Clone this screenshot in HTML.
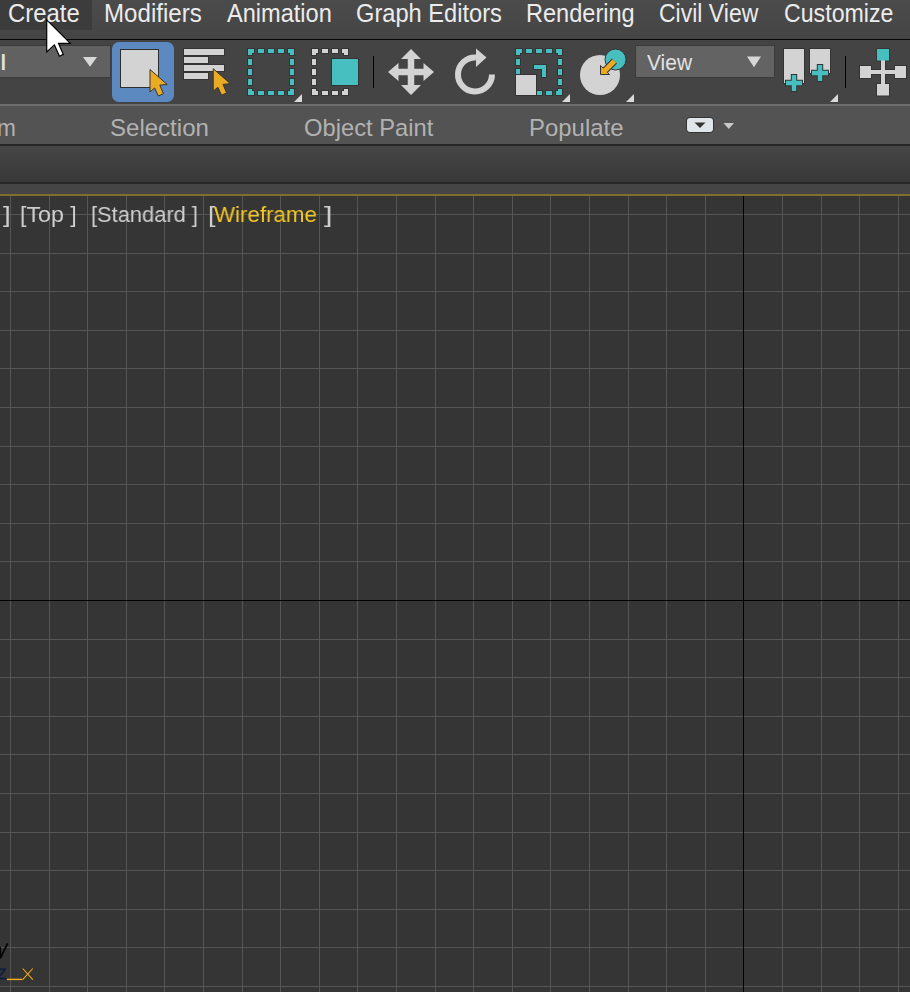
<!DOCTYPE html><html><head><meta charset="utf-8"><style>
html,body{margin:0;padding:0;background:#353535;width:910px;height:992px;overflow:hidden;}
.t{position:absolute;white-space:nowrap;font-family:"Liberation Sans",sans-serif;transform-origin:0 0;line-height:normal;}
.b{position:absolute;left:0;width:910px;}
</style></head><body>

<div class="b" style="top:0;height:39px;background:linear-gradient(#4b4b4b,#454545);"></div>
<div style="position:absolute;left:0;top:0;width:92px;height:30px;background:#3c3c3c;"></div>
<div class="b" style="top:39px;height:1px;background:#070707;"></div>
<div class="b" style="top:40px;height:64px;background:#444;"></div>
<div class="b" style="top:104px;height:2px;background:#6e6e6e;"></div>
<div class="b" style="top:106px;height:38px;background:#535353;"></div>
<div class="b" style="top:144px;height:2px;background:#262626;"></div>
<div class="b" style="top:146px;height:36px;background:linear-gradient(#464646,#383838);"></div>
<div class="b" style="top:182px;height:2px;background:#282828;"></div>
<div class="b" style="top:184px;height:10px;background:#454545;"></div>
<div class="b" style="top:194px;height:2px;background:#816d2c;"></div>
<div style="position:absolute;left:-1px;top:45px;width:110px;height:31px;background:#616161;border:1px solid #3b3b3b;"></div>
<div style="position:absolute;left:635px;top:45px;width:138px;height:31px;background:#636363;border:1px solid #3b3b3b;"></div>

<svg width="910" height="992" style="position:absolute;left:0;top:0"><rect x="10" y="196" width="1" height="796" fill="#555"/>
<rect x="49" y="196" width="1" height="796" fill="#555"/>
<rect x="87" y="196" width="1" height="796" fill="#555"/>
<rect x="126" y="196" width="1" height="796" fill="#555"/>
<rect x="164" y="196" width="1" height="796" fill="#555"/>
<rect x="203" y="196" width="1" height="796" fill="#555"/>
<rect x="242" y="196" width="1" height="796" fill="#555"/>
<rect x="280" y="196" width="1" height="796" fill="#555"/>
<rect x="319" y="196" width="1" height="796" fill="#555"/>
<rect x="357" y="196" width="1" height="796" fill="#555"/>
<rect x="396" y="196" width="1" height="796" fill="#555"/>
<rect x="435" y="196" width="1" height="796" fill="#555"/>
<rect x="473" y="196" width="1" height="796" fill="#555"/>
<rect x="512" y="196" width="1" height="796" fill="#555"/>
<rect x="550" y="196" width="1" height="796" fill="#555"/>
<rect x="589" y="196" width="1" height="796" fill="#555"/>
<rect x="628" y="196" width="1" height="796" fill="#555"/>
<rect x="666" y="196" width="1" height="796" fill="#555"/>
<rect x="705" y="196" width="1" height="796" fill="#555"/>
<rect x="743" y="196" width="1" height="796" fill="#000"/>
<rect x="782" y="196" width="1" height="796" fill="#555"/>
<rect x="821" y="196" width="1" height="796" fill="#555"/>
<rect x="859" y="196" width="1" height="796" fill="#555"/>
<rect x="898" y="196" width="1" height="796" fill="#555"/>
<rect x="0" y="214" width="910" height="1" fill="#555"/>
<rect x="0" y="253" width="910" height="1" fill="#555"/>
<rect x="0" y="291" width="910" height="1" fill="#555"/>
<rect x="0" y="330" width="910" height="1" fill="#555"/>
<rect x="0" y="368" width="910" height="1" fill="#555"/>
<rect x="0" y="407" width="910" height="1" fill="#555"/>
<rect x="0" y="446" width="910" height="1" fill="#555"/>
<rect x="0" y="484" width="910" height="1" fill="#555"/>
<rect x="0" y="523" width="910" height="1" fill="#555"/>
<rect x="0" y="561" width="910" height="1" fill="#555"/>
<rect x="0" y="639" width="910" height="1" fill="#555"/>
<rect x="0" y="677" width="910" height="1" fill="#555"/>
<rect x="0" y="716" width="910" height="1" fill="#555"/>
<rect x="0" y="754" width="910" height="1" fill="#555"/>
<rect x="0" y="793" width="910" height="1" fill="#555"/>
<rect x="0" y="832" width="910" height="1" fill="#555"/>
<rect x="0" y="870" width="910" height="1" fill="#555"/>
<rect x="0" y="909" width="910" height="1" fill="#555"/>
<rect x="0" y="947" width="910" height="1" fill="#555"/>
<rect x="0" y="986" width="910" height="1" fill="#555"/>
<rect x="0" y="600" width="910" height="1" fill="#000"/>
<rect x="743" y="196" width="1" height="796" fill="#000"/><rect x="112" y="42" width="62" height="60" rx="7" fill="#5d89c1"/>
<rect x="120.5" y="49.5" width="38" height="38" fill="#d3d3d3" stroke="#2e2e2e" stroke-width="1"/>
<path d="M150.00,69.50 L150.00,92.00 L154.60,88.00 L158.40,96.00 L163.40,93.70 L159.80,85.10 L167.20,84.50 Z" fill="#eaab22" stroke="#343434" stroke-width="1" stroke-linejoin="miter"/>
<g fill="#d3d3d3" stroke="#343434" stroke-width="1"><rect x="183.5" y="48.5" width="41" height="7"/><rect x="183.5" y="56.5" width="25" height="7"/><rect x="183.5" y="64.5" width="41" height="7"/><rect x="183.5" y="72.5" width="25" height="7"/></g>
<path d="M213.20,68.70 L213.20,91.20 L217.80,87.20 L221.60,95.20 L226.60,92.90 L223.00,84.30 L230.40,83.70 Z" fill="#eaab22" stroke="#343434" stroke-width="1" stroke-linejoin="miter"/>
<path d="M248,49 h6 v4 h-2 v2 h-4 Z M294,49 h-6 v4 h2 v2 h4 Z M248,95 h6 v-4 h-2 v-2 h-4 Z M294,95 h-6 v-4 h2 v-2 h4 Z M258,49 h6 v4 h-6 Z M268,49 h6 v4 h-6 Z M278,49 h6 v4 h-6 Z M258,91 h6 v4 h-6 Z M268,91 h6 v4 h-6 Z M278,91 h6 v4 h-6 Z M248,59 h4 v6 h-4 Z M248,69 h4 v6 h-4 Z M248,79 h4 v6 h-4 Z M290,59 h4 v6 h-4 Z M290,69 h4 v6 h-4 Z M290,79 h4 v6 h-4 Z" fill="#47bfc1" stroke="#343434" stroke-width="2" paint-order="stroke"/>
<path d="M302,94 L302,102 L294,102 Z" fill="#d9d9d9"/>
<path d="M312,49 h6 v4 h-2 v2 h-4 Z M348,49 h-6 v4 h2 v2 h4 Z M312,95 h6 v-4 h-2 v-2 h-4 Z M348,95 h-6 v-4 h2 v-2 h4 Z M322,49 h6 v4 h-6 Z M332,49 h6 v4 h-6 Z M322,91 h6 v4 h-6 Z M332,91 h6 v4 h-6 Z M312,59 h4 v6 h-4 Z M312,69 h4 v6 h-4 Z M312,79 h4 v6 h-4 Z" fill="#d3d3d3" stroke="#343434" stroke-width="2" paint-order="stroke"/>
<rect x="332" y="59" width="26" height="26" fill="#47bfc1" stroke="#343434" stroke-width="2" paint-order="stroke"/>
<rect x="373" y="56" width="1" height="32" fill="#000"/>
<path d="M411,49 L421,59 L414.25,59 L414.25,68.75 L423.5,68.75 L423.5,63 L434,72 L423.5,81 L423.5,75.25 L414.25,75.25 L414.25,85 L421,85 L411,95 L401,85 L407.75,85 L407.75,75.25 L398.5,75.25 L398.5,81 L388,72 L398.5,63 L398.5,68.75 L407.75,68.75 L407.75,59 L401,59 Z" fill="#d3d3d3"/>
<path d="M492,74.5 A17,17 0 1 1 476,57.5" fill="none" stroke="#d3d3d3" stroke-width="6"/>
<path d="M476,48.5 L486.5,57.5 L476,67 Z" fill="#d3d3d3"/>
<path d="M516,49 h6 v4 h-2 v2 h-4 Z M562,49 h-6 v4 h2 v2 h4 Z M516,95 h6 v-4 h-2 v-2 h-4 Z M562,95 h-6 v-4 h2 v-2 h4 Z M526,49 h6 v4 h-6 Z M536,49 h6 v4 h-6 Z M546,49 h6 v4 h-6 Z M558,59 h4 v6 h-4 Z M558,69 h4 v6 h-4 Z M558,79 h4 v6 h-4 Z" fill="#47bfc1" stroke="#343434" stroke-width="2" paint-order="stroke"/>
<path d="M516,49 h6 v4 h-2 v2 h-4 Z M516,59 h4 v6 h-4 Z M516,69 h4 v6 h-4 Z M537,91 h5 v4 h-5 Z M546,91 h6 v4 h-6 Z" fill="#47bfc1" stroke="#343434" stroke-width="2" paint-order="stroke"/>
<rect x="516" y="75" width="20" height="20" fill="#d3d3d3" stroke="#343434" stroke-width="2" paint-order="stroke"/>
<path d="M534,65 h12 v12 h-4 v-8 h-8 Z" fill="#47bfc1" stroke="#343434" stroke-width="2" paint-order="stroke"/>
<path d="M570,94 L570,102 L562,102 Z" fill="#d9d9d9"/>
<circle cx="600" cy="75" r="20" fill="#d3d3d3"/>
<circle cx="615.5" cy="59.5" r="10.5" fill="#47bfc1" stroke="#343434" stroke-width="1"/>
<path d="M614.5,61 L604,71.5" stroke="#343434" stroke-width="7" fill="none"/>
<path d="M600.5,65.5 L600.5,74.5 L609.5,74.5 Z" fill="#eaab22" stroke="#343434" stroke-width="1"/>
<path d="M614.5,61 L603.5,72" stroke="#eaab22" stroke-width="5" fill="none"/>
<path d="M601,66.5 L601,74 L608.5,74 Z" fill="#eaab22"/>
<path d="M634,94 L634,102 L626,102 Z" fill="#d9d9d9"/>
<path d="M83,57 L97,57 L90,66.7 Z" fill="#d8d8d8"/>
<path d="M747,56.5 L761,56.5 L754,67.2 Z" fill="#d8d8d8"/>
<rect x="784" y="49" width="20" height="34" fill="#d3d3d3" stroke="#343434" stroke-width="2" paint-order="stroke"/>
<rect x="810" y="49" width="20" height="24" fill="#d3d3d3" stroke="#343434" stroke-width="2" paint-order="stroke"/>
<path d="M791.8,75 h4.4 v5.8 h5.8 v4.4 h-5.8 v5.8 h-4.4 v-5.8 h-5.8 v-4.4 h5.8 Z" fill="#47bfc1" stroke="#343434" stroke-width="2" paint-order="stroke"/>
<path d="M817.8,65 h4.4 v5.8 h5.8 v4.4 h-5.8 v5.8 h-4.4 v-5.8 h-5.8 v-4.4 h5.8 Z" fill="#47bfc1" stroke="#343434" stroke-width="2" paint-order="stroke"/>
<path d="M838,94 L838,102 L830,102 Z" fill="#d9d9d9"/>
<rect x="845" y="56" width="1" height="32" fill="#000"/>
<path d="M860,66 h11 v12 h-11 Z M895,66 h11 v12 h-11 Z M877,84 h12 v11.5 h-12 Z M881,60 h4 v24 h-4 Z M871,70 h24 v4 h-24 Z" fill="none" stroke="#343434" stroke-width="2"/>
<rect x="877" y="49" width="12" height="11.5" fill="none" stroke="#343434" stroke-width="2"/>
<path d="M860,66 h11 v12 h-11 Z M895,66 h11 v12 h-11 Z M877,84 h12 v11.5 h-12 Z M881,60 h4 v24 h-4 Z M871,70 h24 v4 h-24 Z" fill="#d3d3d3"/>
<rect x="877" y="49" width="12" height="11.5" fill="#47bfc1"/>
<rect x="687" y="118" width="26" height="14" rx="3" fill="#dfe5e9" stroke="#2a2a2a" stroke-width="1.5" paint-order="stroke"/>
<path d="M694.5,122.5 L705.5,122.5 L700,128 Z" fill="#333"/>
<path d="M723.5,123 L734,123 L728.75,129 Z" fill="#c9c9c9"/>
<path d="M7.6,943.4 L1.8,955.2 Q0.8,958 -1.5,958.6" fill="none" stroke="#050505" stroke-width="1.8"/>
<path d="M0,947 Q0.8,952 0.2,957" fill="none" stroke="#050505" stroke-width="1.6"/>
<path d="M-3,968.3 h9 v2 l-6.2,7.3 h6.2 v2 h-9 v-2 l6.2,-7.3 h-6.2 Z" fill="#11203f"/>
<rect x="7" y="978.7" width="15.5" height="1.4" fill="#f0b020"/>
<path d="M22.7,968.5 L32.8,979.6 M32.8,968.5 L22.7,979.6" stroke="#3a2a10" stroke-width="2.2" opacity="0.5"/>
<path d="M22.7,968.5 L32.8,979.6 M32.8,968.5 L22.7,979.6" stroke="#f0b020" stroke-width="1.1"/>
<path d="M46.7,19.8 L46.7,52 L54.4,44.9 L59.5,56.2 L63.3,54.4 L58.5,43.4 L70.3,43.4 Z" fill="#fff" stroke="#000" stroke-width="1.2" stroke-linejoin="miter"/></svg>
<div class="t" style="left:8.18px;top:-1.15px;font-size:25.58px;color:#ececec;transform:scaleX(0.9337);">Create</div>
<div class="t" style="left:103.82px;top:-1.15px;font-size:25.58px;color:#ececec;transform:scaleX(0.9428);">Modifiers</div>
<div class="t" style="left:227.00px;top:-1.15px;font-size:25.58px;color:#ececec;transform:scaleX(0.9215);">Animation</div>
<div class="t" style="left:355.89px;top:-1.15px;font-size:25.58px;color:#ececec;transform:scaleX(0.9241);">Graph Editors</div>
<div class="t" style="left:526.16px;top:-1.15px;font-size:25.58px;color:#ececec;transform:scaleX(0.9206);">Rendering</div>
<div class="t" style="left:659.12px;top:-1.15px;font-size:25.58px;color:#ececec;transform:scaleX(0.8994);">Civil View</div>
<div class="t" style="left:784.31px;top:-1.15px;font-size:25.58px;color:#ececec;transform:scaleX(0.9056);">Customize</div>
<div class="t" style="left:-3.42px;top:113.93px;font-size:23.84px;color:#b2b2b2;transform:scaleX(0.9514);">m</div>
<div class="t" style="left:110.45px;top:113.93px;font-size:23.84px;color:#b2b2b2;transform:scaleX(1.0086);">Selection</div>
<div class="t" style="left:304.39px;top:113.93px;font-size:23.84px;color:#b2b2b2;transform:scaleX(0.9960);">Object Paint</div>
<div class="t" style="left:528.73px;top:113.93px;font-size:23.84px;color:#b2b2b2;transform:scaleX(1.0047);">Populate</div>
<div class="t" style="left:646.50px;top:49.05px;font-size:22.82px;color:#e2e2e2;transform:scaleX(0.9183);">View</div>
<div class="t" style="left:2.70px;top:201.45px;font-size:22.82px;color:#cdcdcd;transform:scaleX(1.2220);will-change:transform;">]</div>
<div class="t" style="left:20.35px;top:201.45px;font-size:22.82px;color:#cdcdcd;transform:scaleX(1.0181);will-change:transform;">[Top ]</div>
<div class="t" style="left:91.33px;top:201.45px;font-size:22.82px;color:#cdcdcd;transform:scaleX(0.9581);will-change:transform;">[Standard ]</div>
<div class="t" style="left:208.21px;top:201.45px;font-size:22.82px;color:#cdcdcd;transform:scaleX(1.1819);will-change:transform;">[</div>
<div class="t" style="left:214.30px;top:201.45px;font-size:22.82px;color:#f3c626;transform:scaleX(0.9779);will-change:transform;">Wireframe</div>
<div class="t" style="left:324.20px;top:201.45px;font-size:22.82px;color:#cdcdcd;transform:scaleX(1.3422);will-change:transform;">]</div>
<div class="t" style="left:0.33px;top:48.95px;font-size:22.82px;color:#e2e2e2;transform:scaleX(1.3088);">l</div>
</body></html>
